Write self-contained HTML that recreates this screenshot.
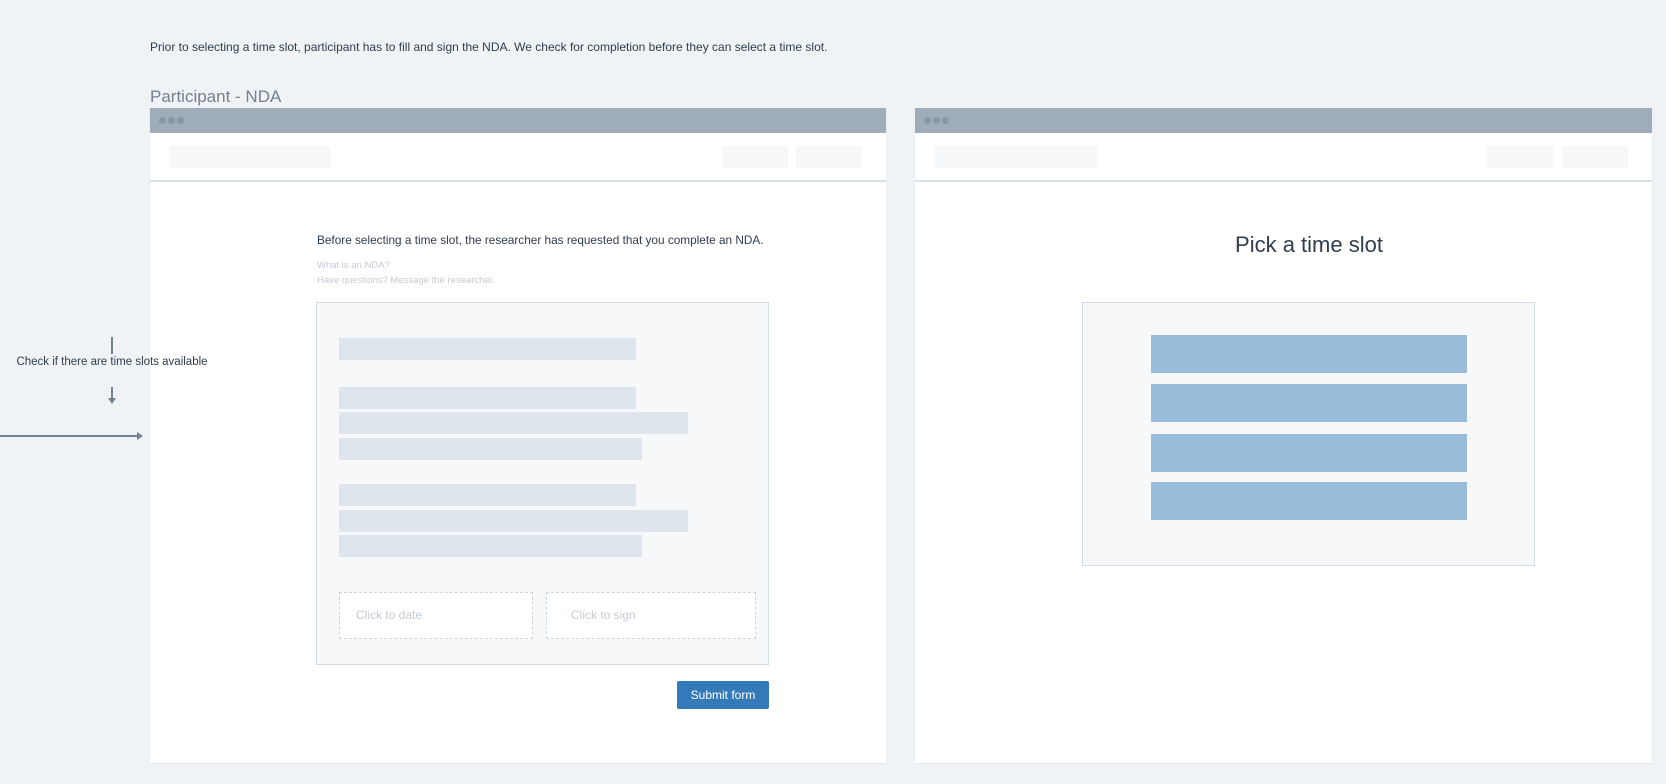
<!DOCTYPE html>
<html><head><style>
*{margin:0;padding:0;box-sizing:border-box}
body{width:1666px;height:784px;background:#eff3f6;font-family:"Liberation Sans",sans-serif;position:relative;overflow:hidden;color:#2f3d4c}
.a{position:absolute}
.win{position:absolute;top:108px;height:655px;background:#fff;box-shadow:0 1px 2px rgba(0,0,0,.05)}
.tb{position:absolute;left:0;right:0;top:0;height:25px;background:#9eadb9}
.dot{position:absolute;top:9px;width:7px;height:7px;border-radius:50%;background:#8897a4}
.hd{position:absolute;left:0;right:0;top:25px;height:49px;border-bottom:2px solid #d8e0e7}
.ph{position:absolute;background:#f6f8fa;height:22px;top:13px}
.bar{position:absolute;background:#dfe5ec;height:22px;left:22px}
.slot{position:absolute;background:#98bcd9;left:68px;width:316px;height:38px}
.dash{position:absolute;border:1.5px dashed #cdd6df;background:#fff;top:289px;height:47px;color:#c3ccd6;font-size:12px;line-height:44px;padding-left:16px}
</style></head><body>
<div class="a" style="left:150px;top:40px;font-size:12px;color:#2f3d4c">Prior to selecting a time slot, participant has to fill and sign the NDA. We check for completion before they can select a time slot.</div>
<div class="a" style="left:150px;top:87px;font-size:17px;color:#74818e">Participant - NDA</div>

<div class="win" style="left:150px;width:736px">
 <div class="tb"><div class="dot" style="left:9px"></div><div class="dot" style="left:18px"></div><div class="dot" style="left:27px"></div></div>
 <div class="hd"><div class="ph" style="left:19px;width:162px"></div><div class="ph" style="left:572px;width:66px"></div><div class="ph" style="left:646px;width:66px"></div></div>
 <div class="a" style="left:167px;top:125px;font-size:11.8px;color:#2f3d4c">Before selecting a time slot, the researcher has requested that you complete an NDA.</div>
 <div class="a" style="left:167px;top:150px;font-size:9.5px;color:#c3ccd6;line-height:15px">What is an NDA?<br>Have questions? Message the researcher.</div>
 <div class="a" style="left:166px;top:194px;width:453px;height:363px;background:#f6f8fa;border:1.5px solid #d3dce4">
  <div class="bar" style="top:35px;width:297px"></div>
  <div class="bar" style="top:84px;width:297px"></div>
  <div class="bar" style="top:109px;width:349px"></div>
  <div class="bar" style="top:135px;width:303px"></div>
  <div class="bar" style="top:181px;width:297px"></div>
  <div class="bar" style="top:207px;width:349px"></div>
  <div class="bar" style="top:232px;width:303px"></div>
  <div class="dash" style="left:22px;width:194px">Click to date</div>
  <div class="dash" style="left:229px;width:210px;padding-left:24px">Click to sign</div>
 </div>
 <div class="a" style="left:527px;top:573px;width:92px;height:28px;background:#357ab8;border-radius:2px;color:#fff;font-size:12px;text-align:center;line-height:28px">Submit form</div>
</div>

<div class="win" style="left:915px;width:737px">
 <div class="tb"><div class="dot" style="left:9px"></div><div class="dot" style="left:18px"></div><div class="dot" style="left:27px"></div></div>
 <div class="hd"><div class="ph" style="left:20px;width:162px"></div><div class="ph" style="left:572px;width:66px"></div><div class="ph" style="left:647px;width:66px"></div></div>
 <div class="a" style="left:0;width:788px;top:124px;text-align:center;font-size:22px;color:#2f3d4c">Pick a time slot</div>
 <div class="a" style="left:167px;top:194px;width:453px;height:264px;background:#f6f8fa;border:1.5px solid #d3dce4">
  <div class="slot" style="top:32px"></div>
  <div class="slot" style="top:81px"></div>
  <div class="slot" style="top:131px"></div>
  <div class="slot" style="top:179px"></div>
 </div>
</div>

<div class="a" style="left:111px;top:337px;width:2px;height:17px;background:#74818e"></div>
<div class="a" style="left:0;width:224px;top:356px;text-align:center;font-size:11.5px;color:#2f3d4c;z-index:5">Check if there are time slots available</div>
<div class="a" style="left:111px;top:387px;width:2px;height:14px;background:#74818e"></div>
<div class="a" style="left:108px;top:398px;border-left:4px solid transparent;border-right:4px solid transparent;border-top:6px solid #74818e"></div>
<div class="a" style="left:0;top:435px;width:138px;height:2px;background:#74818e"></div>
<div class="a" style="left:137px;top:432px;border-top:4px solid transparent;border-bottom:4px solid transparent;border-left:6px solid #74818e"></div>
</body></html>
